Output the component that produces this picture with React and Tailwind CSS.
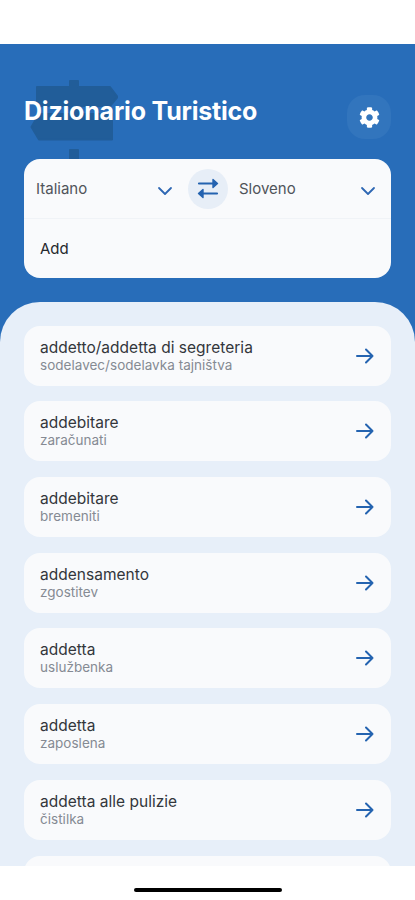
import { FaCog } from "react-icons/fa";

const entries = [
  { term: "addetto/addetta di segreteria", translation: "sodelavec/sodelavka tajništva" },
  { term: "addebitare", translation: "zaračunati" },
  { term: "addebitare", translation: "bremeniti" },
  { term: "addensamento", translation: "zgostitev" },
  { term: "addetta", translation: "uslužbenka" },
  { term: "addetta", translation: "zaposlena" },
  { term: "addetta alle pulizie", translation: "čistilka" },
];

function SignpostIcon({ className }) {
  return (
    <svg viewBox="0 0 88 88" fill="currentColor" stroke="currentColor" strokeWidth="2" strokeLinejoin="round" className={className}>
      <path d="M40 1h8v6h32l7.500 10L80 26H7V7h33z" />
      <path d="M40 26h8v8h34v25.500H9L1.500 47 9 34h31z" />
      <path d="M40 70h8v18h-8z" />
    </svg>
  );
}

function ChevronIcon() {
  return (
    <svg width="16" height="10" viewBox="0 0 16 10" fill="none" stroke="#2e67b3" strokeWidth="1.8" strokeLinecap="round" strokeLinejoin="round">
      <path d="M2 2l6 6 6-6" />
    </svg>
  );
}

function ArrowIcon() {
  return (
    <svg width="20" height="18" viewBox="0 0 20 18" fill="none" stroke="#2463b0" strokeWidth="2" strokeLinecap="round" strokeLinejoin="round">
      <path d="M2 9h15.5M11 2.5L17.5 9 11 15.5" />
    </svg>
  );
}

function SwapIcon() {
  return (
    <svg width="22" height="22" viewBox="0 0 22 22" fill="#2463b0" stroke="#2463b0" strokeLinejoin="round" strokeLinecap="round">
      <path d="M2 5.500h15M20 15.500H5" strokeWidth="2.2" fill="none" />
      <path d="M16 1.500l4.500 4-4.500 4zM6 11.500l-4.500 4 4.500 4z" strokeWidth="1.4" />
    </svg>
  );
}

function Language({ name, className }) {
  return (
    <button className={`flex items-center justify-between pt-0.5 ${className}`}>
      <span>{name}</span>
      <span className="pt-0.5">
        <ChevronIcon />
      </span>
    </button>
  );
}

function Entry({ term, translation }) {
  return (
    <li className="flex h-[60px] shrink-0 items-center justify-between rounded-2xl bg-[#f9fafc] px-4">
      <div>
        <p className="text-[15.500px] leading-[19px] tracking-[0.02px] text-[#33363b]">{term}</p>
        <p className="text-[13.500px] leading-[17px] tracking-[0.02px] text-[#858a93]">{translation}</p>
      </div>
      <ArrowIcon />
    </li>
  );
}

export default function App() {
  return (
    <div className="flex h-[900px] w-[415px] flex-col overflow-hidden bg-white pt-11 font-['Inter',sans-serif]">
      <div className="flex min-h-0 flex-1 flex-col overflow-hidden bg-[#286db9]">
        <header className="relative px-6 pt-[51px]">
          <SignpostIcon className="absolute top-9 left-[30px] size-[88px] text-[#215d99]" />
          <div className="relative flex h-11 items-start justify-between">
            <h1 className="text-[25px] leading-8 font-bold tracking-[-0.2px] text-white">Dizionario Turistico</h1>
            <button className="flex size-11 items-center justify-center rounded-[18px] bg-[#3275bd] text-white">
              <FaCog className="size-[21px]" />
            </button>
          </div>
          <div className="relative mt-5 h-[119px] rounded-2xl bg-[#f9fafc] text-[15px] text-[#50545a]">
            <div className="flex h-[60px] items-center border-b border-[#f0f3f7] pr-[15px] pl-3">
              <Language name="Italiano" className="w-[137px]" />
              <div className="mr-[11px] ml-[15px] flex size-10 shrink-0 items-center justify-center rounded-full bg-[#e7eef7]">
                <SwapIcon />
              </div>
              <Language name="Sloveno" className="flex-1" />
            </div>
            <p className="pt-[18px] pl-4 leading-6 text-[#26292e]">Add</p>
          </div>
        </header>
        <ul className="mt-[23.500px] flex min-h-0 flex-1 flex-col gap-[15.700px] overflow-hidden rounded-t-[40px] bg-[#e7eff9] px-6 pt-[24.200px]">
          {entries.map((entry) => (
            <Entry key={entry.translation} term={entry.term} translation={entry.translation} />
          ))}
          <li className="h-[60px] shrink-0 rounded-2xl bg-[#f9fafc]" />
        </ul>
      </div>
      <footer className="flex h-[34px] justify-center pt-[22px]">
        <div className="h-1 w-[148px] rounded-full bg-black" />
      </footer>
    </div>
  );
}
